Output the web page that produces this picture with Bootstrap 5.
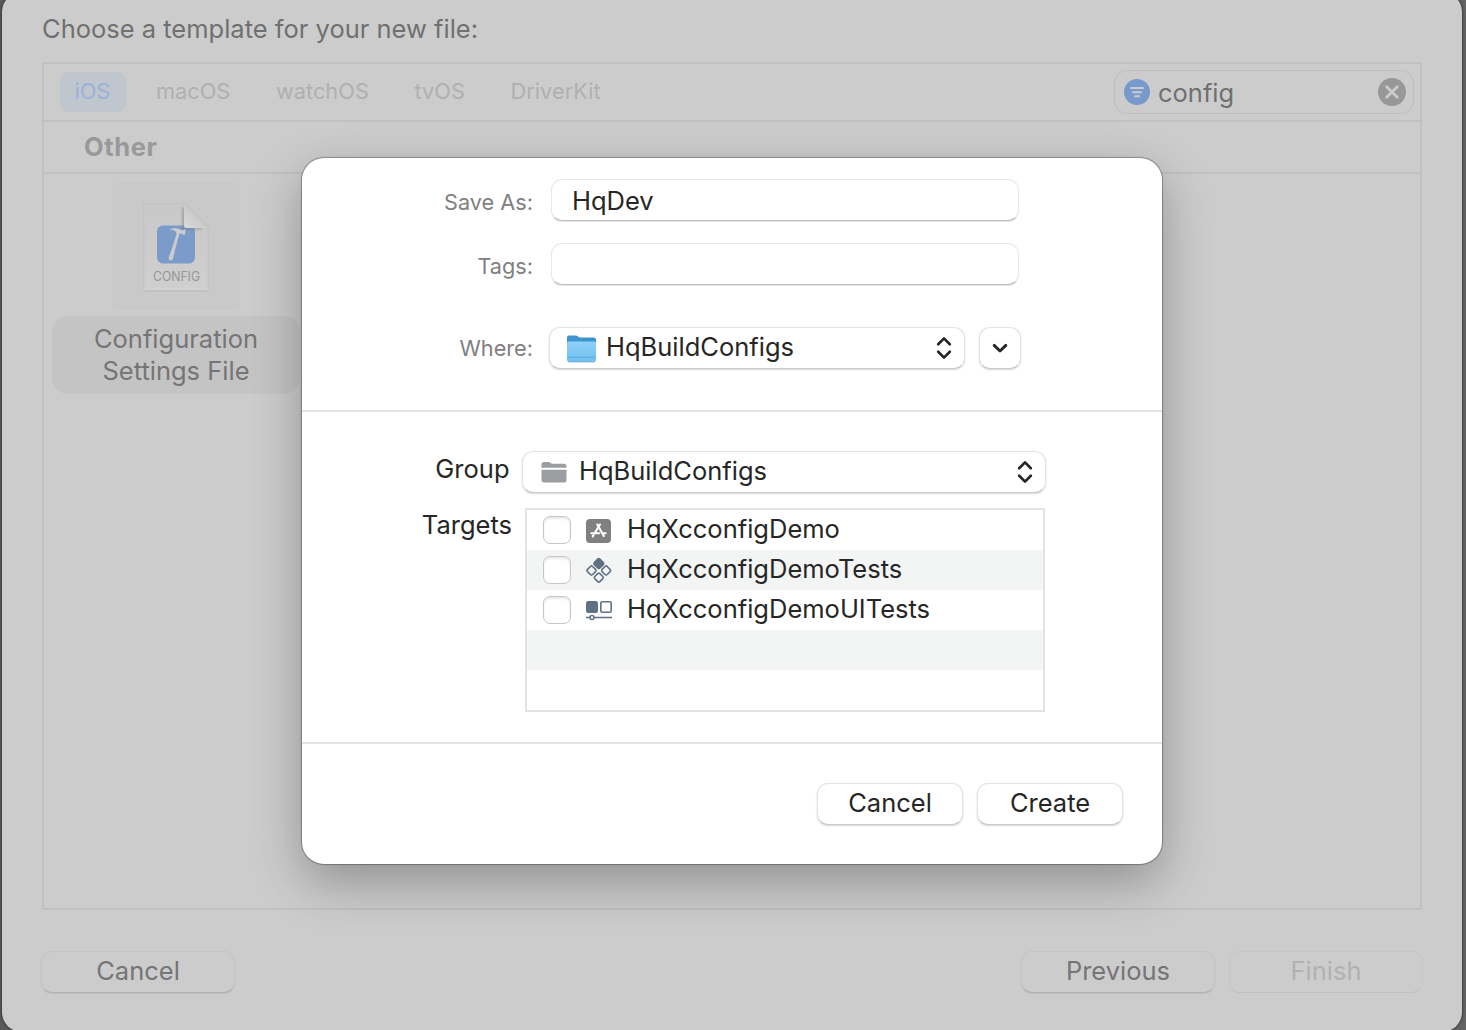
<!DOCTYPE html>
<html lang="en">
<head>
<meta charset="utf-8">
<meta name="viewport" content="width=device-width, initial-scale=1">
<title>New File</title>
<link href="https://cdn.jsdelivr.net/npm/bootstrap@5.3.0/dist/css/bootstrap.min.css" rel="stylesheet">
<style>
body{height:1030px;overflow:hidden;background:linear-gradient(90deg,#5a5b5d,#636363);font-family:Inter,"Liberation Sans",sans-serif;font-size:25.5px;line-height:32px;color:#262626}
svg{display:block;flex:none}
.chooser{width:1460px;height:1040px;margin:-8px 0 0 2px;padding:20px 40px 0;border-radius:20px;background:#ccc;color:#757575;box-shadow:0 0 2px 1px rgba(40,40,40,.6)}
.chooser-title{height:50px;line-height:34px;color:#707070}
.pane{height:848px;border:2px solid #c1c1c1}
.platforms{height:58px;padding:0 6px 0 16px;border-bottom:2px solid #c1c1c1;font-size:21.8px}
.platforms .nav-link{padding:0 15.200px 0 14.400px;height:40px;line-height:38px;color:#b0b0b0;border-radius:9px}
.platforms .nav-link.active{background:#c0c6cd;color:#9ab2d8}
.finder{width:300px;height:44px;border:1px solid #bebebe;border-radius:13px;padding:0 7px 0 9px;font-size:25.5px}
.finder span{padding-top:2px;color:#707070}
.section-name{height:52px;border-bottom:2px solid #c1c1c1;padding-left:40px;line-height:49px;font-weight:700;letter-spacing:.6px;color:#999}
.tile{width:248px;margin:8px 0 0 8px}
.tile-art{width:128px;height:128px;border-radius:7px;background:#c9c9c9}
.tile-name{width:248px;height:78px;margin-top:6px;padding-top:7px;border-radius:16px;background:#c4c4c4}
.foot{margin-top:41px;margin-left:-1px;margin-right:-1px;gap:14px}
.mac{height:42px;padding:0 0 3px;border:1px solid #e4e4e4;border-bottom-color:#c9c9c9;border-radius:11px;background:#fff;color:#262626;font-size:25.5px;line-height:37px;box-shadow:0 1px 2px rgba(0,0,0,.16)}
.chooser .mac{width:194px;background:#ccc;color:#757575;border-color:#c3c3c3;border-bottom-color:#b2b2b2;box-shadow:0 1px 1px rgba(0,0,0,.06)}
.chooser .mac:disabled{opacity:1;color:#b1b1b1;border-color:#c6c6c6;border-bottom-color:#c0c0c0;box-shadow:none}
.sheet{position:absolute;left:302px;top:158px;width:860px;height:706px;border-radius:22px;background:#fff;box-shadow:0 0 1px 1px rgba(0,0,0,.3),0 18px 50px 0 rgba(0,0,0,.29)}
.where-part{height:254px;padding-top:21px;border-bottom:2px solid #e4e4e4}
.target-part{height:332px;padding-top:39px;border-bottom:2px solid #e4e4e4}
.small-label{width:231px;margin-right:18px;text-align:right;font-size:21.7px;color:#808080;white-space:nowrap}
.field{width:468px;height:42px;border:1px solid #e8e8e8;border-bottom:1px solid #bdbdbd;border-radius:11px;padding:1px 20px 1px;font-size:25.5px;line-height:38px;color:#262626;background:#fff;box-shadow:0 1px 0 rgba(0,0,0,.1);outline:0}
.tag-line{margin-top:22px}
.where-row{margin-top:42px}
.where-row .small-label{margin-right:16px}
.where-pop{width:416px;padding:0 12px 0 16px}
.where-pop span,.group-pop span{margin-left:9px;height:38px;line-height:36px}
.expand{width:42px;margin-left:14px;padding:0}
.big-label{text-align:right;white-space:nowrap}
.group-label{width:207.500px;margin-right:12.500px;line-height:35px}
.group-pop{width:524px;padding:0 12px 0 18px}
.group-pop span{margin-left:12px}
.targets-line{margin-top:15px}
.targets-label{width:210px;margin-right:13px;line-height:34px}
.targets{width:520px;height:204px;border:2px solid #e2e3e3}
.target-row{height:40px;padding-left:16px}
.target-row:nth-child(even){background:#f3f5f5}
.target-row .form-check-input{width:28px;height:28px;margin:0;border:1px solid #c6c6c6;border-radius:7px;box-shadow:inset 0 2px 2px rgba(0,0,0,.09);flex:none}
.target-row svg{margin-left:14px;margin-right:14px}
.target-row label{height:34px}
.actions{padding:39px 39px 0 0;gap:14px}
.actions .mac{width:146px}
</style>
</head>
<body>
<main class="chooser">
  <div class="chooser-title">Choose a template for your new file:</div>
  <section class="pane">
    <div class="platforms d-flex align-items-center">
      <nav class="nav flex-nowrap gap-3" aria-label="Platform">
        <a class="nav-link active" href="#">iOS</a><a class="nav-link" href="#">macOS</a><a class="nav-link" href="#">watchOS</a><a class="nav-link" href="#">tvOS</a><a class="nav-link" href="#">DriverKit</a>
      </nav>
      <div class="finder d-flex align-items-center ms-auto">
        <svg width="26" height="26" viewBox="0 0 26 26"><circle cx="13" cy="13" r="13" fill="#7899cc"/><path d="M7 9h12M9 13.3h8M11 17.3h4" stroke="#ccc" stroke-width="2" stroke-linecap="round"/></svg>
        <span class="ms-2">config</span>
        <svg class="ms-auto" width="28" height="28" viewBox="0 0 28 28"><circle cx="14" cy="14" r="14" fill="#989898"/><path d="M8.700 8.700 19.300 19.300M19.300 8.700 8.700 19.300" stroke="#ccc" stroke-width="2.800" stroke-linecap="round"/></svg>
      </div>
    </div>
    <div class="section-name">Other</div>
    <div class="tile d-flex flex-column align-items-center text-center">
      <div class="tile-art">
        <svg width="128" height="128" viewBox="0 0 128 128">
          <defs><linearGradient id="sheetFill" x2="0" y2="1"><stop stop-color="#c8c8c8"/><stop offset="1" stop-color="#cfcfcf"/></linearGradient><linearGradient id="fold" x1="0" y1="1" x2=".6" y2=".4"><stop stop-color="#dadada"/><stop offset="1" stop-color="#c8c8c8"/></linearGradient><filter id="soft" x="-20%" y="-20%" width="140%" height="140%"><feGaussianBlur stdDeviation="1"/></filter></defs>
          <path d="M34 22H72L96 46V107a2 2 0 0 1-2 2H34a2 2 0 0 1-2-2V24a2 2 0 0 1 2-2Z" fill="#aaa" filter="url(#soft)" opacity=".55"/>
          <path d="M34 22H72L96 46V106a2 2 0 0 1-2 2H34a2 2 0 0 1-2-2V24a2 2 0 0 1 2-2Z" fill="url(#sheetFill)" stroke="#c3c3c3" stroke-width=".7"/>
          <path d="M32.5 107H95.5" stroke="#d7d7d7"/>
          <rect x="45" y="43.500" width="38" height="38" rx="6" fill="#7b9bcb"/>
          <path d="M58 47.500C61.500 45.500 66 46 69 48L71 48.300 72.500 46.900 73.800 48 73 52.400 70.500 52.500 69.500 51.500 67.500 51.500C65.700 58 63 67 61 76.500Q60.700 78.500 59 78.500 56 78 56.600 75.500C60 67 62.500 59 64.500 52 64.500 49 61.500 47.800 58 48.100Z" fill="#ccc"/>
          <path d="M70 24V47.500H91Z" fill="#777" filter="url(#soft)" opacity=".45"/>
          <path d="M72 22 96 46H74a2 2 0 0 1-2-2Z" fill="url(#fold)"/>
          <text x="64.500" y="99" text-anchor="middle" font-size="12.600" textLength="47" lengthAdjust="spacingAndGlyphs" fill="#959595">CONFIG</text>
        </svg>
      </div>
      <div class="tile-name">Configuration<br>Settings File</div>
    </div>
  </section>
  <div class="foot d-flex">
    <button class="btn mac me-auto">Cancel</button>
    <button class="btn mac">Previous</button>
    <button class="btn mac" disabled>Finish</button>
  </div>
</main>

<div class="sheet" role="dialog" aria-label="Save file">
  <div class="where-part">
    <div class="d-flex align-items-center"><label class="small-label pt-1" for="saveAs">Save As:</label><input id="saveAs" class="field" value="HqDev"></div>
    <div class="tag-line d-flex align-items-center"><label class="small-label pt-1" for="tags">Tags:</label><input id="tags" class="field"></div>
    <div class="where-row d-flex align-items-center">
      <span class="small-label">Where:</span>
      <button class="btn mac where-pop d-flex align-items-center">
        <svg width="31" height="30" viewBox="0 0 31 30"><defs><linearGradient id="blueFolder" x2="0" y2="1"><stop stop-color="#8fd0f7"/><stop offset="1" stop-color="#70c1f2"/></linearGradient></defs><path d="M1 4.500Q1 2.500 3 2.500H9.500Q11 2.500 12 3.500T14.500 4.500H27.500Q30 4.500 30 7V24H1Z" fill="#3d94cf"/><path d="M1 10Q1 8.500 2.500 8.500H28.500Q30 8.500 30 10V26.500Q30 28.500 28 28.500H3Q1 28.500 1 26.500Z" fill="url(#blueFolder)"/><path d="M1 24.300H30" stroke="#55a9dc" stroke-width=".8"/><path d="M1.500 27.800Q2 28.800 3.500 28.800H27.500Q29 28.800 29.500 27.800" stroke="#5a9fc9" fill="none"/></svg>
        <span>HqBuildConfigs</span>
        <svg class="ms-auto" width="16" height="24" viewBox="0 0 16 24"><path d="m2.200 8.200 5.800-5.800 5.800 5.800M2.200 15.800l5.800 5.800 5.800-5.800" fill="none" stroke="#262626" stroke-width="2.700" stroke-linecap="round" stroke-linejoin="round"/></svg>
      </button>
      <button class="btn mac expand d-flex align-items-center justify-content-center" aria-label="Expand"><svg width="16" height="10" viewBox="0 0 16 10"><path d="m2.200 2.400 5.800 5.600 5.800-5.600" fill="none" stroke="#262626" stroke-width="2.900" stroke-linecap="round" stroke-linejoin="round"/></svg></button>
    </div>
  </div>
  <div class="target-part">
    <div class="d-flex">
      <span class="big-label group-label">Group</span>
      <button class="btn mac group-pop d-flex align-items-center">
        <svg width="26" height="22" viewBox="0 0 26 22"><path d="M.5 6.800V3.500Q.5 1 3 1H7.500Q8.700 1 9.500 1.800T12 2.800H23Q25.500 2.800 25.500 5.300V6.800Z" fill="#9b9fa2"/><path d="M.5 8.800H25.500V19Q25.500 21.500 23 21.500H3Q.5 21.500.5 19Z" fill="#9b9fa2"/></svg>
        <span>HqBuildConfigs</span>
        <svg class="ms-auto" width="16" height="24" viewBox="0 0 16 24"><path d="m2.200 8.200 5.800-5.800 5.800 5.800M2.200 15.800l5.800 5.800 5.800-5.800" fill="none" stroke="#262626" stroke-width="2.700" stroke-linecap="round" stroke-linejoin="round"/></svg>
      </button>
    </div>
    <div class="d-flex targets-line">
      <span class="big-label targets-label">Targets</span>
      <div class="targets">
        <div class="target-row d-flex align-items-center">
          <input class="form-check-input" type="checkbox" id="c1">
          <svg width="28" height="28" viewBox="0 0 28 28"><rect x="1" y="3" width="25" height="24" rx="4" fill="#808080"/><path d="M12.300 8.500 18.800 20M15 8.500 9.600 17.300M6.300 17.300H14.200M17.500 17.300H20.700M8.400 19.300 7.800 20.500" fill="none" stroke="#fff" stroke-width="2.100" stroke-linecap="round"/></svg>
          <label for="c1">HqXcconfigDemo</label>
        </div>
        <div class="target-row d-flex align-items-center">
          <input class="form-check-input" type="checkbox" id="c2">
          <svg width="28" height="28" viewBox="0 0 28 28" fill="none" stroke="#5f7183" stroke-width="1.600"><rect x="9.900" y="3.700" width="7.800" height="7.800" rx="1.500" transform="rotate(45 13.800 7.600)" fill="#5f7183"/><rect x="2.900" y="10.900" width="7.200" height="7.200" rx="1.500" transform="rotate(45 6.500 14.500)"/><rect x="17.500" y="10.900" width="7.200" height="7.200" rx="1.500" transform="rotate(45 21.100 14.500)"/><rect x="10.200" y="18" width="7.200" height="7.200" rx="1.500" transform="rotate(45 13.800 21.600)"/></svg>
          <label for="c2">HqXcconfigDemoTests</label>
        </div>
        <div class="target-row d-flex align-items-center">
          <input class="form-check-input" type="checkbox" id="c3">
          <svg width="28" height="28" viewBox="0 0 28 28" fill="none" stroke="#5f7183" stroke-width="1.600"><rect x="1.800" y="5.800" width="10.400" height="10.400" rx="1.500" fill="#5f7183"/><rect x="15.800" y="5.800" width="10.400" height="10.400" rx="1.500"/><path d="M1 21.500H4.800M9.200 21.500H27"/><circle cx="7" cy="21.500" r="2"/></svg>
          <label for="c3">HqXcconfigDemoUITests</label>
        </div>
        <div class="target-row"></div>
        <div class="target-row"></div>
      </div>
    </div>
  </div>
  <div class="actions d-flex justify-content-end">
    <button class="btn mac">Cancel</button>
    <button class="btn mac">Create</button>
  </div>
</div>
<script src="https://cdn.jsdelivr.net/npm/bootstrap@5.3.0/dist/js/bootstrap.bundle.min.js"></script>
</body>
</html>
